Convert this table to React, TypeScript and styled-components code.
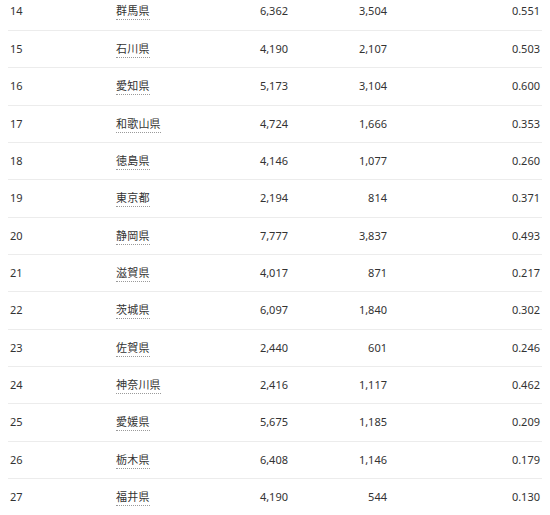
import React from "react";
import styled, { createGlobalStyle } from "styled-components";

const Global = createGlobalStyle`
  html, body { margin: 0; padding: 0; background: #fff; }
  body { overflow: hidden; }
`;

const Page = styled.div`
  padding: 0 8px;
  margin-top: -7px;
  font-family: "Noto Sans", "Noto Sans CJK JP", sans-serif;
  font-size: 11px;
  color: #333;
`;

const Table = styled.table`
  width: 534px;
  border-collapse: collapse;
  table-layout: fixed;
`;

const Row = styled.tr`
  height: 37.35px;
  border-bottom: 1px solid #ececec;
`;

const Cell = styled.td<{ $align?: "left" | "right"; $w: number; $pl?: number; $pr?: number }>`
  width: ${(p) => p.$w}px;
  padding: 0 ${(p) => p.$pr ?? 0}px 0 ${(p) => p.$pl ?? 0}px;
  text-align: ${(p) => p.$align ?? "left"};
  vertical-align: middle;
  line-height: 14px;
  white-space: nowrap;
`;

const Pref = styled.span`
  border-bottom: 1px dotted #9a9a9a;
  padding-bottom: 1px;
  letter-spacing: 0.2px;
`;

const data: [number, string, string, string, string][] = [
  [14, "群馬県", "6,362", "3,504", "0.551"],
  [15, "石川県", "4,190", "2,107", "0.503"],
  [16, "愛知県", "5,173", "3,104", "0.600"],
  [17, "和歌山県", "4,724", "1,666", "0.353"],
  [18, "徳島県", "4,146", "1,077", "0.260"],
  [19, "東京都", "2,194", "814", "0.371"],
  [20, "静岡県", "7,777", "3,837", "0.493"],
  [21, "滋賀県", "4,017", "871", "0.217"],
  [22, "茨城県", "6,097", "1,840", "0.302"],
  [23, "佐賀県", "2,440", "601", "0.246"],
  [24, "神奈川県", "2,416", "1,117", "0.462"],
  [25, "愛媛県", "5,675", "1,185", "0.209"],
  [26, "栃木県", "6,408", "1,146", "0.179"],
  [27, "福井県", "4,190", "544", "0.130"],
];

export default function App() {
  return (
    <>
      <Global />
      <Page>
        <Table>
          <tbody>
            {data.map(([rank, name, a, b, r]) => (
              <Row key={rank}>
                <Cell $w={106} $pl={2}>{rank}</Cell>
                <Cell $w={100}>
                  <Pref>{name}</Pref>
                </Cell>
                <Cell $w={72} $align="right">{a}</Cell>
                <Cell $w={99} $align="right">{b}</Cell>
                <Cell $w={153} $align="right" $pr={2}>{r}</Cell>
              </Row>
            ))}
          </tbody>
        </Table>
      </Page>
    </>
  );
}
